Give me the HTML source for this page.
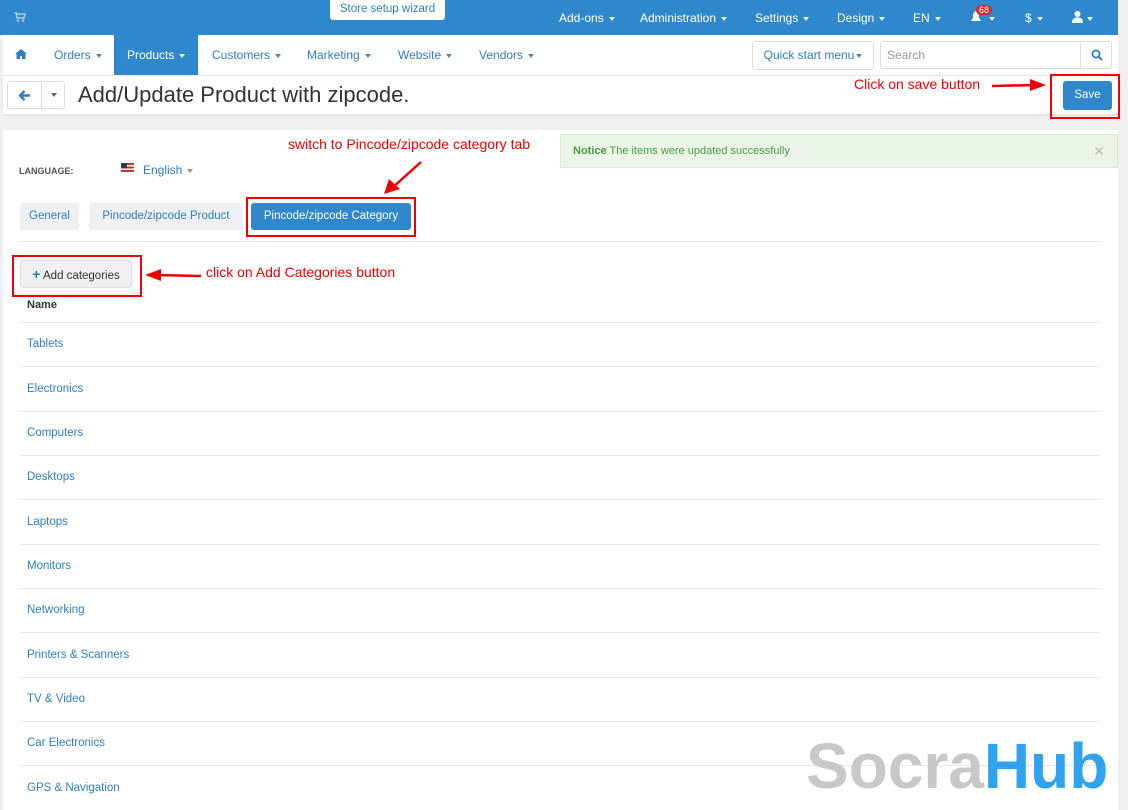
<!DOCTYPE html>
<html><head><meta charset="utf-8"><style>
*{box-sizing:border-box;margin:0;padding:0}
body{width:1128px;height:805px;overflow:hidden;background:#eef0f2;font-family:"Liberation Sans",sans-serif;font-size:12px;color:#333;position:relative}
.abs{position:absolute}
.top{left:0;top:0;width:1118px;height:35px;background:#3088cc}
.top span{position:absolute;top:11px;color:#fff;font-size:12px}
.c{display:inline-block;width:0;height:0;border-left:3px solid transparent;border-right:3px solid transparent;border-top:4px solid currentColor;vertical-align:middle;margin-left:5px;opacity:.9}
.nav{left:3px;top:35px;width:1115px;height:41px;background:#fff;border-bottom:1px solid #e6e6e6}
.nav span{position:absolute;top:13px;color:#2f7fbf;font-size:12px}
.hdr{left:3px;top:76px;width:1115px;height:38px;background:#fff;box-shadow:0 1px 2px #ddd}
.card{left:3px;top:130px;width:1115px;height:680px;background:#fff}
.red{color:#e00;font-size:14px;position:absolute}
.box{position:absolute;border:2px solid #e00}
.row{position:absolute;left:20px;width:1080px;border-top:1px solid #e8e8e8}
.row span{position:absolute;left:7px;color:#2f7fbf;font-size:11.5px}
</style></head><body>
<div class="abs top">
<svg class="abs" style="left:14px;top:12px" width="12" height="10" viewBox="0 0 12 10"><path d="M0 0h2l1 6h7l1-4H3" fill="none" stroke="#a9cdea" stroke-width="1.6"/><circle cx="4" cy="8.5" r="1.2" fill="#a9cdea"/><circle cx="9" cy="8.5" r="1.2" fill="#a9cdea"/></svg>
<div class="abs" style="left:330px;top:0;width:115px;height:20px;background:#fff;border-radius:0 0 3px 3px;color:#2f7fbf;text-align:center;line-height:19px;font-size:11.5px">Store setup wizard</div>
<span style="left:559px">Add-ons<i class="c"></i></span>
<span style="left:640px">Administration<i class="c"></i></span>
<span style="left:755px">Settings<i class="c"></i></span>
<span style="left:837px">Design<i class="c"></i></span>
<span style="left:913px">EN<i class="c"></i></span>
<svg class="abs" style="left:970px;top:11px" width="12" height="12" viewBox="0 0 12 12"><path d="M6 0C3 1 3 4 3 7L1 10h10L9 7C9 4 9 1 6 0z" fill="#fff"/></svg>
<span style="left:984px"><i class="c"></i></span>
<div class="abs" style="left:976px;top:5px;background:#c9302c;color:#fff;font-size:9px;border-radius:7px;padding:0 3px">68</div>
<span style="left:1025px">$<i class="c"></i></span>
<svg class="abs" style="left:1072px;top:11px" width="11" height="12" viewBox="0 0 11 12"><circle cx="5.5" cy="3" r="3" fill="#fff"/><path d="M0 12c0-4 2-5.5 5.5-5.5S11 8 11 12z" fill="#fff"/></svg>
<span style="left:1082px"><i class="c"></i></span>
</div>
<div class="abs nav">
<svg class="abs" style="left:12px;top:14px" width="12" height="10" viewBox="0 0 12 10"><path d="M6 0L0 5h1.5v5h3.5V7h2v3h3.5V5H12z" fill="#2f7fbf"/></svg>
<span style="left:51px">Orders<i class="c"></i></span>
<div class="abs" style="left:111px;top:0;width:84px;height:40px;background:#3088cc"></div>
<span style="left:124px;color:#fff">Products<i class="c"></i></span>
<span style="left:209px">Customers<i class="c"></i></span>
<span style="left:304px">Marketing<i class="c"></i></span>
<span style="left:395px">Website<i class="c"></i></span>
<span style="left:476px">Vendors<i class="c"></i></span>
<div class="abs" style="left:749px;top:6px;width:122px;height:29px;border:1px solid #ddd;border-radius:3px;color:#2f7fbf;font-size:12px;line-height:27px;text-align:center">Quick start menu<i class="c" style="margin-left:2px"></i></div>
<div class="abs" style="left:877px;top:6px;width:232px;height:28px;border:1px solid #ddd;border-radius:3px;color:#999;line-height:26px;padding-left:6px">Search<div class="abs" style="right:0;top:0;width:31px;height:26px;border-left:1px solid #ddd"><svg class="abs" style="left:10px;top:7px" width="12" height="12" viewBox="0 0 12 12"><circle cx="5" cy="5" r="3.6" fill="none" stroke="#2f7fbf" stroke-width="1.8"/><path d="M7.5 7.5L11 11" stroke="#2f7fbf" stroke-width="2"/></svg></div></div>
</div>
<div class="abs hdr">
<div class="abs" style="left:4px;top:5px;width:58px;height:28px;border:1px solid #ddd;border-radius:3px"><div class="abs" style="left:33px;top:0;height:26px;border-left:1px solid #ddd"></div>
<svg class="abs" style="left:11px;top:8px" width="12" height="11" viewBox="0 0 12 11"><path d="M1 5.5h10M5.5 1L1 5.5 5.5 10" fill="none" stroke="#2f7fbf" stroke-width="2.4"/></svg>
<i class="c abs" style="left:38px;top:11px;color:#555"></i></div>
<div class="abs" style="left:75px;top:6px;font-size:22px;color:#333">Add/Update Product with zipcode.</div>
<div class="abs" style="left:1060px;top:5px;width:49px;height:29px;background:#3088cc;border-radius:3px;color:#fff;text-align:center;line-height:29px;font-size:11.5px">Save</div>
</div>
<div class="box" style="left:1050px;top:74px;width:70px;height:45px"></div>
<div class="red" style="left:854px;top:76px">Click on save button</div>
<svg class="abs" style="left:990px;top:78px" width="60" height="14"><line x1="2" y1="8" x2="45" y2="7" stroke="#e00" stroke-width="2.5"/><path d="M40 1 L56 7 L40 13Z" fill="#e00"/></svg>
<div class="abs card">
<div class="abs" style="left:557px;top:4px;width:558px;height:34px;background:#eaf5e8;border:1px solid #d8ecd3;color:#4a9a44;line-height:32px;padding-left:12px;font-size:11px"><b>Notice</b> The items were updated successfully<span class="abs" style="right:12px;top:0;color:#bbb;font-size:14px">✕</span></div>
<div class="abs" style="left:16px;top:36px;font-size:9px;font-weight:bold;color:#555">LANGUAGE:</div>
<div class="abs" style="left:118px;top:33px;width:13px;height:9px;background:linear-gradient(#c33 0 20%,#fff 20% 40%,#c33 40% 60%,#fff 60% 80%,#c33 80%)"><div style="width:6px;height:5px;background:#336"></div></div>
<div class="abs" style="left:140px;top:33px;color:#2f7fbf;font-size:12px">English<i class="c" style="color:#888"></i></div>
<div class="abs" style="left:17px;top:73px;width:59px;height:27px;background:#eef0f2;border-radius:3px;color:#2f7fbf;text-align:center;line-height:27px;font-size:11.5px">General</div>
<div class="abs" style="left:86px;top:73px;width:154px;height:27px;background:#eef0f2;border-radius:3px;color:#2f7fbf;text-align:center;line-height:27px;font-size:11.5px">Pincode/zipcode Product</div>
<div class="abs" style="left:248px;top:73px;width:160px;height:27px;background:#3088cc;border-radius:3px;color:#fff;text-align:center;line-height:27px;font-size:11.5px">Pincode/zipcode Category</div>
<div class="box" style="left:243px;top:67px;width:170px;height:40px"></div>
<div class="red" style="left:285px;top:6px">switch to Pincode/zipcode category tab</div>
<svg class="abs" style="left:375px;top:30px" width="50" height="36"><line x1="43" y1="2" x2="14" y2="28" stroke="#e00" stroke-width="2.5"/><path d="M6 34 L11 19 L22 29Z" fill="#e00"/></svg>
<div class="abs" style="left:17px;top:111px;width:1080px;border-top:1px solid #e6e6e6"></div>
<div class="abs" style="left:17px;top:130px;width:112px;height:28px;background:#f0f1f2;border:1px solid #ddd;border-radius:3px;line-height:26px;text-align:center;font-size:11.5px"><b style="color:#2f7fbf;font-size:14px">+</b> Add categories</div>
<div class="box" style="left:9px;top:125px;width:130px;height:42px"></div>
<svg class="abs" style="left:140px;top:138px" width="60" height="14"><line x1="12" y1="7" x2="58" y2="8" stroke="#e00" stroke-width="2.5"/><path d="M2 7 L18 1 L18 13Z" fill="#e00"/></svg>
<div class="red" style="left:203px;top:134px">click on Add Categories button</div>
<div class="abs" style="left:24px;top:169px;font-weight:bold;font-size:11px;color:#333">Name</div>
</div>
<div class="row" style="top:322px"><span style="top:15px">Tablets</span></div>
<div class="row" style="top:366px"><span style="top:16px">Electronics</span></div>
<div class="row" style="top:411px"><span style="top:15px">Computers</span></div>
<div class="row" style="top:455px"><span style="top:15px">Desktops</span></div>
<div class="row" style="top:499px"><span style="top:16px">Laptops</span></div>
<div class="row" style="top:544px"><span style="top:15px">Monitors</span></div>
<div class="row" style="top:588px"><span style="top:15px">Networking</span></div>
<div class="row" style="top:632px"><span style="top:16px">Printers &amp; Scanners</span></div>
<div class="row" style="top:677px"><span style="top:15px">TV &amp; Video</span></div>
<div class="row" style="top:721px"><span style="top:15px">Car Electronics</span></div>
<div class="row" style="top:765px"><span style="top:16px">GPS &amp; Navigation</span></div>
<div class="abs" style="left:806px;top:734px;font-family:'Liberation Sans',sans-serif;font-weight:bold;font-size:64px;line-height:64px;white-space:nowrap"><span style="color:#c8c8c8">Socra</span><span style="color:#2fa3f0">Hub</span></div>
</body></html>
